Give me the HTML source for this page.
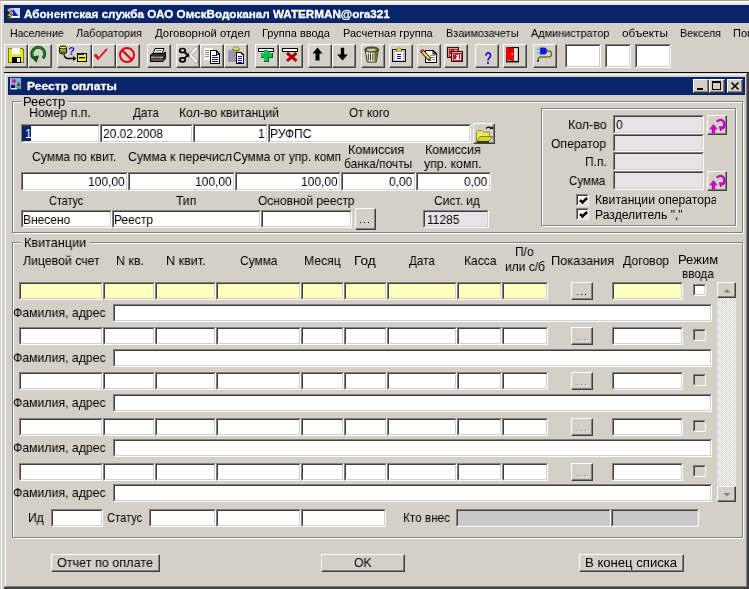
<!DOCTYPE html>
<html><head><meta charset="utf-8"><title>Реестр оплаты</title>
<style>
html,body{margin:0;padding:0;}
body{width:749px;height:589px;overflow:hidden;background:#d4d0c8;position:relative;font-family:"Liberation Sans",sans-serif;font-size:13px;color:#000;}
div{position:absolute;box-sizing:border-box;}
.t{white-space:nowrap;transform-origin:0 0;will-change:transform;}
.fld{border-top:1px solid #808080;border-left:1px solid #808080;border-right:1px solid #fff;border-bottom:1px solid #fff;overflow:hidden;}
.fld:before{content:"";position:absolute;left:0;top:0;right:0;bottom:0;border-top:1px solid #404040;border-left:1px solid #404040;border-right:1px solid #d4d0c8;border-bottom:1px solid #d4d0c8;}
.btn{background:#d4d0c8;border-top:1px solid #fff;border-left:1px solid #fff;border-right:1px solid #404040;border-bottom:1px solid #404040;}
.btn:before{content:"";position:absolute;left:0;top:0;right:0;bottom:0;border-right:1px solid #808080;border-bottom:1px solid #808080;}
.gb{border:1px solid #808080;box-shadow:1px 1px 0 #fff, inset 1px 1px 0 #fff;}
.cb{border-top:1px solid #808080;border-left:1px solid #808080;border-right:1px solid #fff;border-bottom:1px solid #fff;}
.cb:before{content:"";position:absolute;left:0;top:0;right:0;bottom:0;border-top:1px solid #404040;border-left:1px solid #404040;border-right:1px solid #d4d0c8;border-bottom:1px solid #d4d0c8;}
.cb svg{position:absolute;left:2px;top:2px;}
.tb{background:#d4d0c8;border-top:1px solid #fff;border-left:1px solid #fff;border-right:1px solid #404040;border-bottom:1px solid #404040;}
.tb:before{content:"";position:absolute;left:0;top:0;right:0;bottom:0;border-right:1px solid #808080;border-bottom:1px solid #808080;}
.tb svg{position:absolute;left:2px;top:2px;}
.cover{background:#d4d0c8;}
</style></head><body>

<div style="left:1px;top:1px;width:1px;height:589px;background:#fff"></div>
<div style="left:0px;top:0px;width:749px;height:1px;background:#a8a098"></div>
<div style="left:1px;top:1px;width:749px;height:2px;background:#fff"></div>
<div style="left:3px;top:3px;width:746px;height:2px;background:#e2e2e8"></div>
<div style="left:4px;top:5px;width:746px;height:18px;background:#0a246a"></div>
<!--APPICON-->
<div class="t" style="left:24.00px;top:7.69px;font-size:11px;line-height:13px;transform:scaleX(1.0609);font-weight:bold;-webkit-text-stroke:0.3px currentColor;color:#fff;">Абонентская служба ОАО ОмскВодоканал WATERMAN@ora321</div>
<div class="t" style="left:9.50px;top:26.69px;font-size:11px;line-height:13px;transform:scaleX(0.9554);">Население</div>
<div class="t" style="left:76.00px;top:26.69px;font-size:11px;line-height:13px;transform:scaleX(0.9851);">Лаборатория</div>
<div class="t" style="left:155.00px;top:26.69px;font-size:11px;line-height:13px;transform:scaleX(1.0326);">Договорной отдел</div>
<div class="t" style="left:262.00px;top:26.69px;font-size:11px;line-height:13px;transform:scaleX(1.0000);">Группа ввода</div>
<div class="t" style="left:343.00px;top:26.69px;font-size:11px;line-height:13px;transform:scaleX(1.0000);">Расчетная группа</div>
<div class="t" style="left:446.00px;top:26.69px;font-size:11px;line-height:13px;transform:scaleX(0.9865);">Взаимозачеты</div>
<div class="t" style="left:531.00px;top:26.69px;font-size:11px;line-height:13px;transform:scaleX(0.9873);">Администратор</div>
<div class="t" style="left:622.00px;top:26.69px;font-size:11px;line-height:13px;transform:scaleX(1.0698);">объекты</div>
<div class="t" style="left:680.00px;top:26.69px;font-size:11px;line-height:13px;transform:scaleX(0.9762);">Векселя</div>
<div class="t" style="left:733.00px;top:26.69px;font-size:11px;line-height:13px;transform:scaleX(1.0000);">Помощь</div>
<div class="tb" style="left:4px;top:44px;width:24px;height:24px;"></div>
<div class="tb" style="left:28px;top:44px;width:24px;height:24px;"></div>
<div class="tb" style="left:57px;top:44px;width:35px;height:24px;"></div>
<div class="tb" style="left:92px;top:44px;width:24px;height:24px;"></div>
<div class="tb" style="left:116px;top:44px;width:24px;height:24px;"></div>
<div class="tb" style="left:147px;top:44px;width:24px;height:24px;"></div>
<div class="tb" style="left:176px;top:44px;width:24px;height:24px;"></div>
<div class="tb" style="left:200px;top:44px;width:24px;height:24px;"></div>
<div class="tb" style="left:224px;top:44px;width:24px;height:24px;"></div>
<div class="tb" style="left:255px;top:44px;width:24px;height:24px;"></div>
<div class="tb" style="left:279px;top:44px;width:24px;height:24px;"></div>
<div class="tb" style="left:308px;top:44px;width:24px;height:24px;"></div>
<div class="tb" style="left:332px;top:44px;width:24px;height:24px;"></div>
<div class="tb" style="left:361px;top:44px;width:24px;height:24px;"></div>
<div class="tb" style="left:389px;top:44px;width:24px;height:24px;"></div>
<div class="tb" style="left:417px;top:44px;width:24px;height:24px;"></div>
<div class="tb" style="left:444px;top:44px;width:24px;height:24px;"></div>
<div class="tb" style="left:475px;top:44px;width:24px;height:24px;"></div>
<div class="tb" style="left:503px;top:44px;width:24px;height:24px;"></div>
<div class="tb" style="left:533px;top:44px;width:24px;height:24px;"></div>
<div class="fld " style="left:565px;top:44px;width:36px;height:24px;background:#fff;"></div>
<div class="fld " style="left:605px;top:44px;width:26px;height:24px;background:#fff;"></div>
<div class="fld " style="left:635px;top:44px;width:36px;height:24px;background:#fff;"></div>
<div style="left:4px;top:72px;width:745px;height:1px;background:#0c0c0c"></div>
<div style="left:5px;top:74px;width:742px;height:1px;background:#fff"></div>
<div style="left:5px;top:74px;width:1px;height:513px;background:#fff"></div>
<div style="left:4px;top:587px;width:745px;height:2px;background:#404040"></div>
<div style="left:747px;top:73px;width:2px;height:516px;background:#404040"></div>
<div style="left:5px;top:586px;width:742px;height:1px;background:#808080"></div>
<div style="left:746px;top:74px;width:1px;height:513px;background:#808080"></div>
<div style="left:8px;top:77px;width:737px;height:18px;background:#0a246a"></div>
<!--CHILDICON-->
<div class="t" style="left:27.00px;top:79.69px;font-size:11px;line-height:13px;transform:scaleX(1.0988);font-weight:bold;-webkit-text-stroke:0.3px currentColor;color:#fff;">Реестр оплаты</div>
<div class="tb" style="left:693px;top:79px;width:16px;height:14px;"></div>
<div class="tb" style="left:709px;top:79px;width:16px;height:14px;"></div>
<div class="tb" style="left:727px;top:79px;width:16px;height:14px;"></div>
<div class="gb" style="left:12px;top:101px;width:731px;height:132px;"></div>
<div class="cover" style="left:21px;top:96px;width:47px;height:12px;"></div>
<div class="t" style="left:23.00px;top:94.00px;font-size:13px;line-height:15px;transform:scaleX(1.0000);">Реестр</div>
<div class="t" style="left:29.05px;top:105.00px;font-size:13px;line-height:15px;transform:scaleX(0.9524);">Номер п.п.</div>
<div class="t" style="left:132.50px;top:105.00px;font-size:13px;line-height:15px;transform:scaleX(0.9000);">Дата</div>
<div class="t" style="left:179.06px;top:105.00px;font-size:13px;line-height:15px;transform:scaleX(0.9429);">Кол-во квитанций</div>
<div class="t" style="left:349.00px;top:105.00px;font-size:13px;line-height:15px;transform:scaleX(0.9091);">От кого</div>
<div class="fld " style="left:21px;top:124px;width:79px;height:19px;background:#fff;"></div>
<div style="left:22px;top:126px;width:9px;height:15px;background:#0a246a"></div>
<div class="t" style="left:24.50px;top:126.00px;font-size:13px;line-height:15px;transform:scaleX(0.9231);color:#fff;">1</div>
<div class="fld " style="left:100px;top:124px;width:93px;height:19px;background:#fff;"></div>
<div class="t" style="left:103.00px;top:126.00px;font-size:13px;line-height:15px;transform:scaleX(0.9231);">20.02.2008</div>
<div class="fld " style="left:193px;top:124px;width:75px;height:19px;background:#fff;"></div>
<div class="t" style="left:258.04px;top:126.00px;font-size:13px;line-height:15px;transform:scaleX(0.9231);">1</div>
<div class="fld " style="left:268px;top:124px;width:203px;height:19px;background:#fff;"></div>
<div class="t" style="left:270.08px;top:126.00px;font-size:13px;line-height:15px;transform:scaleX(0.9231);">РУФПС</div>
<div class="tb" style="left:473px;top:123px;width:22px;height:21px;"></div>
<div class="t" style="left:32.00px;top:149.00px;font-size:13px;line-height:15px;transform:scaleX(0.9333);">Сумма по квит.</div>
<div class="t" style="left:127.50px;top:149.00px;font-size:13px;line-height:15px;transform:scaleX(0.9455);">Сумма к перечисл</div>
<div class="t" style="left:232.50px;top:149.00px;font-size:13px;line-height:15px;transform:scaleX(0.9153);">Сумма от упр. комп</div>
<div class="t" style="left:348.04px;top:142.00px;font-size:13px;line-height:15px;transform:scaleX(0.9649);">Комиссия</div>
<div class="t" style="left:343.70px;top:156.00px;font-size:13px;line-height:15px;transform:scaleX(0.9162);">банка/почты</div>
<div class="t" style="left:424.54px;top:142.00px;font-size:13px;line-height:15px;transform:scaleX(0.9561);">Комиссия</div>
<div class="t" style="left:424.00px;top:156.00px;font-size:13px;line-height:15px;transform:scaleX(0.9500);">упр. комп.</div>
<div class="fld " style="left:21px;top:172px;width:107px;height:19px;background:#fff;"></div>
<div class="t" style="left:87.58px;top:174.00px;font-size:13px;line-height:15px;transform:scaleX(0.9231);">100,00</div>
<div class="fld " style="left:128px;top:172px;width:107px;height:19px;background:#fff;"></div>
<div class="t" style="left:194.58px;top:174.00px;font-size:13px;line-height:15px;transform:scaleX(0.9231);">100,00</div>
<div class="fld " style="left:235px;top:172px;width:106px;height:19px;background:#fff;"></div>
<div class="t" style="left:300.58px;top:174.00px;font-size:13px;line-height:15px;transform:scaleX(0.9231);">100,00</div>
<div class="fld " style="left:341px;top:172px;width:75px;height:19px;background:#fff;"></div>
<div class="t" style="left:389.42px;top:174.00px;font-size:13px;line-height:15px;transform:scaleX(0.9231);">0,00</div>
<div class="fld " style="left:416px;top:172px;width:75px;height:19px;background:#fff;"></div>
<div class="t" style="left:464.42px;top:174.00px;font-size:13px;line-height:15px;transform:scaleX(0.9231);">0,00</div>
<div class="t" style="left:49.00px;top:193.00px;font-size:13px;line-height:15px;transform:scaleX(0.8333);">Статус</div>
<div class="t" style="left:176.00px;top:193.00px;font-size:13px;line-height:15px;transform:scaleX(0.9318);">Тип</div>
<div class="t" style="left:258.00px;top:193.00px;font-size:13px;line-height:15px;transform:scaleX(0.9231);">Основной реестр</div>
<div class="t" style="left:434.00px;top:193.00px;font-size:13px;line-height:15px;transform:scaleX(0.9200);">Сист. ид</div>
<div class="fld " style="left:21px;top:210px;width:91px;height:18px;background:#fff;"></div>
<div class="t" style="left:23.08px;top:212.00px;font-size:13px;line-height:15px;transform:scaleX(0.9231);">Внесено</div>
<div class="fld " style="left:112px;top:210px;width:149px;height:18px;background:#fff;"></div>
<div class="t" style="left:114.08px;top:212.00px;font-size:13px;line-height:15px;transform:scaleX(0.9231);">Реестр</div>
<div class="fld " style="left:261px;top:210px;width:91px;height:18px;background:#fff;"></div>
<div class="btn" style="left:355px;top:208px;width:21px;height:22px;"></div>
<div style="left:360px;top:222px;width:1px;height:1px;background:#000"></div>
<div style="left:364px;top:222px;width:1px;height:1px;background:#000"></div>
<div style="left:368px;top:222px;width:1px;height:1px;background:#000"></div>
<div class="fld " style="left:423px;top:210px;width:66px;height:18px;background:#e6e2e6;"></div>
<div class="t" style="left:426.50px;top:212.00px;font-size:13px;line-height:15px;transform:scaleX(0.9200);">11285</div>
<div class="gb" style="left:541px;top:108px;width:195px;height:118px;"></div>
<div class="t" style="left:568.04px;top:117.00px;font-size:13px;line-height:15px;transform:scaleX(0.9564);">Кол-во</div>
<div class="t" style="left:551.00px;top:136.00px;font-size:13px;line-height:15px;transform:scaleX(0.9373);">Оператор</div>
<div class="t" style="left:585.08px;top:154.00px;font-size:13px;line-height:15px;transform:scaleX(0.9227);">П.п.</div>
<div class="t" style="left:569.00px;top:173.00px;font-size:13px;line-height:15px;transform:scaleX(0.8881);">Сумма</div>
<div class="fld " style="left:613px;top:115px;width:91px;height:19px;background:#e6e2e6;"></div>
<div class="t" style="left:616.00px;top:117.00px;font-size:13px;line-height:15px;transform:scaleX(0.9231);">0</div>
<div class="fld " style="left:613px;top:134px;width:91px;height:18px;background:#e6e2e6;"></div>
<div class="fld " style="left:613px;top:152px;width:91px;height:19px;background:#e6e2e6;"></div>
<div class="fld " style="left:613px;top:171px;width:91px;height:19px;background:#e6e2e6;"></div>
<div class="tb" style="left:707px;top:115px;width:20px;height:20px;"></div>
<div class="tb" style="left:707px;top:171px;width:20px;height:20px;"></div>
<div class="cb" style="left:576px;top:194px;width:13px;height:12px;background:#fff"><svg width="9" height="9" viewBox="0 0 9 9"><path d="M1 3 L3.5 5.5 L8 1" stroke="#000" stroke-width="2.5" fill="none"/></svg></div>
<div class="cb" style="left:576px;top:208px;width:13px;height:12px;background:#fff"><svg width="9" height="9" viewBox="0 0 9 9"><path d="M1 3 L3.5 5.5 L8 1" stroke="#000" stroke-width="2.5" fill="none"/></svg></div>
<div style="left:590px;top:190px;width:126px;height:18px;overflow:hidden;">
<div class="t" style="left:4.80px;top:3.04px;font-size:12px;line-height:14px;transform:scaleX(1.0165);">Квитанции оператора</div>
</div>
<div class="t" style="left:594.80px;top:207.64px;font-size:12px;line-height:14px;transform:scaleX(1.0140);">Разделитель ","</div>
<div class="gb" style="left:12px;top:242px;width:731px;height:296px;"></div>
<div class="cover" style="left:21px;top:237px;width:69px;height:12px;"></div>
<div class="t" style="left:23.53px;top:235.00px;font-size:13px;line-height:15px;transform:scaleX(0.9714);">Квитанции</div>
<div class="t" style="left:23.00px;top:253.00px;font-size:13px;line-height:15px;transform:scaleX(0.9469);">Лицевой счет</div>
<div class="t" style="left:115.54px;top:253.00px;font-size:13px;line-height:15px;transform:scaleX(0.9571);">N кв.</div>
<div class="t" style="left:165.53px;top:253.00px;font-size:13px;line-height:15px;transform:scaleX(0.9692);">N квит.</div>
<div class="t" style="left:239.70px;top:253.00px;font-size:13px;line-height:15px;transform:scaleX(0.9167);">Сумма</div>
<div class="t" style="left:303.56px;top:253.00px;font-size:13px;line-height:15px;transform:scaleX(0.9359);">Месяц</div>
<div class="t" style="left:353.95px;top:253.00px;font-size:13px;line-height:15px;transform:scaleX(1.0500);">Год</div>
<div class="t" style="left:409.00px;top:253.00px;font-size:13px;line-height:15px;transform:scaleX(0.9000);">Дата</div>
<div class="t" style="left:463.57px;top:253.00px;font-size:13px;line-height:15px;transform:scaleX(0.9286);">Касса</div>
<div class="t" style="left:551.02px;top:253.00px;font-size:13px;line-height:15px;transform:scaleX(0.9841);">Показания</div>
<div class="t" style="left:623.00px;top:253.00px;font-size:13px;line-height:15px;transform:scaleX(0.9388);">Договор</div>
<div class="t" style="left:515.31px;top:244.00px;font-size:13px;line-height:15px;transform:scaleX(0.9231);">П/о</div>
<div class="t" style="left:505.15px;top:259.00px;font-size:13px;line-height:15px;transform:scaleX(0.9231);">или с/б</div>
<div class="t" style="left:678.00px;top:252.00px;font-size:13px;line-height:15px;transform:scaleX(1.0000);">Режим</div>
<div class="t" style="left:681.70px;top:266.00px;font-size:13px;line-height:15px;transform:scaleX(0.8972);">ввода</div>
<div class="fld " style="left:19px;top:282px;width:84px;height:18px;background:#ffffc0;"></div>
<div class="fld " style="left:103px;top:282px;width:52px;height:18px;background:#ffffc0;"></div>
<div class="fld " style="left:155px;top:282px;width:61px;height:18px;background:#ffffc0;"></div>
<div class="fld " style="left:216px;top:282px;width:85px;height:18px;background:#ffffc0;"></div>
<div class="fld " style="left:301px;top:282px;width:43px;height:18px;background:#ffffc0;"></div>
<div class="fld " style="left:344px;top:282px;width:43px;height:18px;background:#ffffc0;"></div>
<div class="fld " style="left:387px;top:282px;width:70px;height:18px;background:#ffffc0;"></div>
<div class="fld " style="left:457px;top:282px;width:45px;height:18px;background:#ffffc0;"></div>
<div class="fld " style="left:502px;top:282px;width:46px;height:18px;background:#ffffc0;"></div>
<div class="btn" style="left:571px;top:282px;width:22px;height:18px;"></div>
<div style="left:577px;top:294px;width:1px;height:1px;background:#000"></div>
<div style="left:581px;top:294px;width:1px;height:1px;background:#000"></div>
<div style="left:585px;top:294px;width:1px;height:1px;background:#000"></div>
<div class="fld " style="left:612px;top:282px;width:71px;height:18px;background:#ffffc0;"></div>
<div class="cb" style="left:693px;top:284px;width:13px;height:12px;background:#fff"></div>
<div class="t" style="left:13.00px;top:305.00px;font-size:13px;line-height:15px;transform:scaleX(0.9424);">Фамилия, адрес</div>
<div class="fld " style="left:113px;top:304px;width:599px;height:18px;background:#fff;"></div>
<div class="fld " style="left:19px;top:327px;width:84px;height:18px;background:#fff;"></div>
<div class="fld " style="left:103px;top:327px;width:52px;height:18px;background:#fff;"></div>
<div class="fld " style="left:155px;top:327px;width:61px;height:18px;background:#fff;"></div>
<div class="fld " style="left:216px;top:327px;width:85px;height:18px;background:#fff;"></div>
<div class="fld " style="left:301px;top:327px;width:43px;height:18px;background:#fff;"></div>
<div class="fld " style="left:344px;top:327px;width:43px;height:18px;background:#fff;"></div>
<div class="fld " style="left:387px;top:327px;width:70px;height:18px;background:#fff;"></div>
<div class="fld " style="left:457px;top:327px;width:45px;height:18px;background:#fff;"></div>
<div class="fld " style="left:502px;top:327px;width:46px;height:18px;background:#fff;"></div>
<div class="btn" style="left:571px;top:327px;width:22px;height:18px;"></div>
<div style="left:578px;top:340px;width:1px;height:1px;background:#fff"></div>
<div style="left:577px;top:339px;width:1px;height:1px;background:#808080"></div>
<div style="left:582px;top:340px;width:1px;height:1px;background:#fff"></div>
<div style="left:581px;top:339px;width:1px;height:1px;background:#808080"></div>
<div style="left:586px;top:340px;width:1px;height:1px;background:#fff"></div>
<div style="left:585px;top:339px;width:1px;height:1px;background:#808080"></div>
<div class="fld " style="left:612px;top:327px;width:71px;height:18px;background:#fff;"></div>
<div class="cb" style="left:693px;top:329px;width:13px;height:12px;background:#d4d0c8"></div>
<div class="t" style="left:13.00px;top:350.00px;font-size:13px;line-height:15px;transform:scaleX(0.9424);">Фамилия, адрес</div>
<div class="fld " style="left:113px;top:349px;width:599px;height:18px;background:#fff;"></div>
<div class="fld " style="left:19px;top:372px;width:84px;height:18px;background:#fff;"></div>
<div class="fld " style="left:103px;top:372px;width:52px;height:18px;background:#fff;"></div>
<div class="fld " style="left:155px;top:372px;width:61px;height:18px;background:#fff;"></div>
<div class="fld " style="left:216px;top:372px;width:85px;height:18px;background:#fff;"></div>
<div class="fld " style="left:301px;top:372px;width:43px;height:18px;background:#fff;"></div>
<div class="fld " style="left:344px;top:372px;width:43px;height:18px;background:#fff;"></div>
<div class="fld " style="left:387px;top:372px;width:70px;height:18px;background:#fff;"></div>
<div class="fld " style="left:457px;top:372px;width:45px;height:18px;background:#fff;"></div>
<div class="fld " style="left:502px;top:372px;width:46px;height:18px;background:#fff;"></div>
<div class="btn" style="left:571px;top:372px;width:22px;height:18px;"></div>
<div style="left:578px;top:385px;width:1px;height:1px;background:#fff"></div>
<div style="left:577px;top:384px;width:1px;height:1px;background:#808080"></div>
<div style="left:582px;top:385px;width:1px;height:1px;background:#fff"></div>
<div style="left:581px;top:384px;width:1px;height:1px;background:#808080"></div>
<div style="left:586px;top:385px;width:1px;height:1px;background:#fff"></div>
<div style="left:585px;top:384px;width:1px;height:1px;background:#808080"></div>
<div class="fld " style="left:612px;top:372px;width:71px;height:18px;background:#fff;"></div>
<div class="cb" style="left:693px;top:374px;width:13px;height:12px;background:#d4d0c8"></div>
<div class="t" style="left:13.00px;top:395.00px;font-size:13px;line-height:15px;transform:scaleX(0.9424);">Фамилия, адрес</div>
<div class="fld " style="left:113px;top:394px;width:599px;height:18px;background:#fff;"></div>
<div class="fld " style="left:19px;top:418px;width:84px;height:18px;background:#fff;"></div>
<div class="fld " style="left:103px;top:418px;width:52px;height:18px;background:#fff;"></div>
<div class="fld " style="left:155px;top:418px;width:61px;height:18px;background:#fff;"></div>
<div class="fld " style="left:216px;top:418px;width:85px;height:18px;background:#fff;"></div>
<div class="fld " style="left:301px;top:418px;width:43px;height:18px;background:#fff;"></div>
<div class="fld " style="left:344px;top:418px;width:43px;height:18px;background:#fff;"></div>
<div class="fld " style="left:387px;top:418px;width:70px;height:18px;background:#fff;"></div>
<div class="fld " style="left:457px;top:418px;width:45px;height:18px;background:#fff;"></div>
<div class="fld " style="left:502px;top:418px;width:46px;height:18px;background:#fff;"></div>
<div class="btn" style="left:571px;top:418px;width:22px;height:18px;"></div>
<div style="left:578px;top:431px;width:1px;height:1px;background:#fff"></div>
<div style="left:577px;top:430px;width:1px;height:1px;background:#808080"></div>
<div style="left:582px;top:431px;width:1px;height:1px;background:#fff"></div>
<div style="left:581px;top:430px;width:1px;height:1px;background:#808080"></div>
<div style="left:586px;top:431px;width:1px;height:1px;background:#fff"></div>
<div style="left:585px;top:430px;width:1px;height:1px;background:#808080"></div>
<div class="fld " style="left:612px;top:418px;width:71px;height:18px;background:#fff;"></div>
<div class="cb" style="left:693px;top:420px;width:13px;height:12px;background:#d4d0c8"></div>
<div class="t" style="left:13.00px;top:440.00px;font-size:13px;line-height:15px;transform:scaleX(0.9424);">Фамилия, адрес</div>
<div class="fld " style="left:113px;top:439px;width:599px;height:18px;background:#fff;"></div>
<div class="fld " style="left:19px;top:463px;width:84px;height:18px;background:#fff;"></div>
<div class="fld " style="left:103px;top:463px;width:52px;height:18px;background:#fff;"></div>
<div class="fld " style="left:155px;top:463px;width:61px;height:18px;background:#fff;"></div>
<div class="fld " style="left:216px;top:463px;width:85px;height:18px;background:#fff;"></div>
<div class="fld " style="left:301px;top:463px;width:43px;height:18px;background:#fff;"></div>
<div class="fld " style="left:344px;top:463px;width:43px;height:18px;background:#fff;"></div>
<div class="fld " style="left:387px;top:463px;width:70px;height:18px;background:#fff;"></div>
<div class="fld " style="left:457px;top:463px;width:45px;height:18px;background:#fff;"></div>
<div class="fld " style="left:502px;top:463px;width:46px;height:18px;background:#fff;"></div>
<div class="btn" style="left:571px;top:463px;width:22px;height:18px;"></div>
<div style="left:578px;top:476px;width:1px;height:1px;background:#fff"></div>
<div style="left:577px;top:475px;width:1px;height:1px;background:#808080"></div>
<div style="left:582px;top:476px;width:1px;height:1px;background:#fff"></div>
<div style="left:581px;top:475px;width:1px;height:1px;background:#808080"></div>
<div style="left:586px;top:476px;width:1px;height:1px;background:#fff"></div>
<div style="left:585px;top:475px;width:1px;height:1px;background:#808080"></div>
<div class="fld " style="left:612px;top:463px;width:71px;height:18px;background:#fff;"></div>
<div class="cb" style="left:693px;top:465px;width:13px;height:12px;background:#d4d0c8"></div>
<div class="t" style="left:13.00px;top:485.00px;font-size:13px;line-height:15px;transform:scaleX(0.9424);">Фамилия, адрес</div>
<div class="fld " style="left:113px;top:484px;width:599px;height:18px;background:#fff;"></div>
<div id="sbtrack" style="left:717px;top:282px;width:19px;height:220px;background:repeating-conic-gradient(#fff 0% 25%, #d4d0c8 0% 50%) 0 0/2px 2px;"></div>
<div class="tb" style="left:717px;top:282px;width:19px;height:16px;"><svg width="9" height="5" style="left:5px;top:5px"><path d="M0.5 4.5 L4 1 L7.5 4.5 Z" fill="#808080"/></svg></div>
<div class="tb" style="left:717px;top:486px;width:19px;height:16px;"><svg width="9" height="5" style="left:5px;top:6px"><path d="M0.5 0 L4 3.5 L7.5 0 Z" fill="#808080"/></svg></div>
<div class="t" style="left:27.56px;top:510.00px;font-size:13px;line-height:15px;transform:scaleX(0.9375);">Ид</div>
<div class="fld " style="left:51px;top:509px;width:52px;height:18px;background:#fff;"></div>
<div class="t" style="left:107.00px;top:510.00px;font-size:13px;line-height:15px;transform:scaleX(0.8571);">Статус</div>
<div class="fld " style="left:149px;top:509px;width:67px;height:18px;background:#fff;"></div>
<div class="fld " style="left:216px;top:509px;width:85px;height:18px;background:#fff;"></div>
<div class="fld " style="left:301px;top:509px;width:85px;height:18px;background:#fff;"></div>
<div class="t" style="left:402.60px;top:510.00px;font-size:13px;line-height:15px;transform:scaleX(0.9038);">Кто внес</div>
<div class="fld " style="left:456px;top:509px;width:155px;height:18px;background:#c8c8cc;"></div>
<div class="fld " style="left:611px;top:509px;width:88px;height:18px;background:#c8c8cc;"></div>
<div class="btn" style="left:51px;top:554px;width:109px;height:18px;"></div>
<div class="t" style="left:57.00px;top:555.00px;font-size:13px;line-height:15px;transform:scaleX(0.9697);">Отчет по оплате</div>
<div class="btn" style="left:321px;top:554px;width:84px;height:18px;"></div>
<div class="t" style="left:353.50px;top:555.00px;font-size:13px;line-height:15px;transform:scaleX(0.9474);">OK</div>
<div class="btn" style="left:579px;top:554px;width:105px;height:18px;"></div>
<div class="t" style="left:584.69px;top:555.00px;font-size:13px;line-height:15px;transform:scaleX(1.0088);">В конец списка</div>
<svg width="749" height="589" viewBox="0 0 749 589" style="position:absolute;left:0;top:0;pointer-events:none">
<g><rect x="10" y="8" width="10" height="10" fill="#c8d8f8"/><path d="M13 9 L19 17 L13 17 Z" fill="#1010d0"/><rect x="11" y="16" width="8" height="2" fill="#fff"/><path d="M7 9 L13 8 L13 11 L9 12 Z" fill="#c0a0e0"/><path d="M11 11 L7 16 L9.5 16 L7 21 L12.5 14.5 L10 14.5 L13 11 Z" fill="#e8e810" stroke="#403000" stroke-width="0.8"/></g>
<g><rect x="10" y="78" width="11" height="11" fill="#60c0d8"/><rect x="10" y="78" width="1" height="11" fill="#d0a0e0"/><circle cx="14" cy="81" r="2" fill="#e0108c"/><path d="M16.5 86 L19 81.5 L20.5 86 Z" fill="#c01020"/><rect x="11" y="85" width="4" height="3" fill="#101080"/><rect x="16" y="87" width="4" height="2" fill="#20b0a0"/><rect x="11" y="88" width="6" height="1.5" fill="#e8e8f8"/></g>
<g shape-rendering="crispEdges"><path d="M8 48 H22 L24 50 V63 H8 Z" fill="#e4e430" stroke="none"/><path d="M8.5 48.5 H22 L23.5 50 V62.5 H8.5 Z" fill="none" stroke="#808000" stroke-width="1"/><rect x="12" y="48" width="8" height="6" fill="#fff"/><rect x="12" y="57" width="9" height="6" fill="#000"/><rect x="17" y="58" width="3" height="4" fill="#fff"/></g>
<path d="M42.8 58.2 A6.4 6.4 0 1 0 33.2 57.6" fill="none" stroke="#0a5a14" stroke-width="3"/><path d="M30.5 56.5 L39 55.5 L36.5 62.8 Z" fill="#0a5a14"/><path d="M42.4 57.6 A5.9 5.9 0 1 0 33.8 57" fill="none" stroke="#2f8f3a" stroke-width="1"/>
<g><path d="M59.5 48 V52.5 A3.5 1.5 0 0 0 66.5 52.5 V48" fill="#f0f040" stroke="#000" stroke-width="1"/><ellipse cx="63" cy="47.5" rx="3.5" ry="1.5" fill="#f0f040" stroke="#000" stroke-width="1"/><path d="M59.5 49.8 A3.5 1.5 0 0 0 66.5 49.8 M59.5 51.4 A3.5 1.5 0 0 0 66.5 51.4" fill="none" stroke="#000" stroke-width="0.8"/><path d="M64 55 Q65 58.5 68 58.5 H74" fill="none" stroke="#000" stroke-width="1.3"/><path d="M73 56 L76.5 58.5 L73 61 Z" fill="#000"/><rect x="77.5" y="53.5" width="9" height="8" fill="#f0f040" stroke="#000" stroke-width="1"/><rect x="78" y="53" width="6" height="2" fill="#101080"/><rect x="79" y="57" width="6" height="1.3" fill="#000"/><text x="68.2" y="54.5" font-family="Liberation Sans" font-weight="bold" font-size="11" fill="#1818e0">?</text></g>
<path d="M94.5 55 L98 59 L107 48.8" fill="none" stroke="#e00828" stroke-width="1.8"/><path d="M94 55.5 L96 53.5 L99 57.5 L98 59.5 Z" fill="#e00828"/>
<circle cx="127" cy="55" r="7" fill="none" stroke="#e00018" stroke-width="2"/><path d="M122 50 L132 60" stroke="#e00018" stroke-width="2.2"/>
<g><path d="M153 54 L155 48.5 H164 L162 54 Z" fill="#fff" stroke="#000" stroke-width="1"/><path d="M156 50.5 H162 M155.3 52.3 H161.3" stroke="#606060" stroke-width="0.8"/><path d="M150.5 55 L152.5 53.5 H163.5 L165.5 52 V58.5 L163 61.5 H150.5 Z" fill="#303030" stroke="#000" stroke-width="1"/><rect x="151" y="56.6" width="12" height="1.6" fill="#b0b0b0"/><rect x="151" y="59.6" width="12" height="1" fill="#808080"/><rect x="154" y="57" width="6" height="0.9" fill="#e04040"/></g>
<g><path d="M187 56.5 L195.5 47 L197.5 47 L197.5 49 L189.5 57.5 Z" fill="#fff" stroke="#808080" stroke-width="0.6"/><path d="M187 53.5 L189.5 52.5 L197.5 61 L197.5 63 L195.5 63 Z" fill="#fff" stroke="#808080" stroke-width="0.6"/><ellipse cx="182.5" cy="50.5" rx="2.8" ry="2" fill="none" stroke="#000" stroke-width="1.7"/><ellipse cx="182.5" cy="59.8" rx="2.8" ry="2" fill="none" stroke="#000" stroke-width="1.7"/><path d="M184.5 52 L189 56.5 M184.5 58.3 L189 53.8" stroke="#000" stroke-width="1.8"/></g>
<g shape-rendering="crispEdges"><rect x="204" y="48" width="9" height="12" fill="#fff"/><path d="M205 50.5 H209 M205 52.5 H209 M205 54.5 H209 M205 56.5 H209" stroke="#909090" stroke-width="1"/><path d="M210.5 50.5 H216 L219.5 54 V63.5 H210.5 Z" fill="#fff" stroke="#000" stroke-width="1"/><path d="M216 50.5 V54 H219.5" fill="none" stroke="#000" stroke-width="1"/><path d="M212 55.5 H217 M212 57.5 H218 M212 59.5 H218 M212 61.5 H218" stroke="#1010c0" stroke-width="1"/></g>
<g shape-rendering="crispEdges"><rect x="228" y="50" width="11" height="12" fill="#9898a8"/><path d="M232 50 L234 47 H238 L240 50 Z" fill="#e8e850" stroke="#606000" stroke-width="0.6" shape-rendering="auto"/><path d="M236.5 52.5 H241 L243.5 55 V63.5 H236.5 Z" fill="#fff" stroke="#000" stroke-width="1"/><path d="M238 56.5 H242 M238 58.5 H242 M238 60.5 H242 M238 62 H242" stroke="#1010c0" stroke-width="1"/></g>
<g shape-rendering="crispEdges"><rect x="258.5" y="48.5" width="15" height="3" fill="#fff" stroke="#000" stroke-width="1"/><rect x="264" y="51" width="5" height="11" fill="#006428"/><rect x="261" y="53" width="12" height="5" fill="#006428"/><rect x="264" y="50" width="4" height="11" fill="#10c050"/><rect x="261" y="53" width="11" height="4" fill="#10c050"/></g>
<g><rect x="282.5" y="48.5" width="15" height="3" fill="#fff" stroke="#000" stroke-width="1" shape-rendering="crispEdges"/><path d="M287 53 L296.5 60.8 M296.5 53 L287 60.8" stroke="#b00010" stroke-width="3"/></g>
<path d="M317.5 47.5 L322.5 53.5 H319.5 V60.5 H315.5 V53.5 H312.5 Z" fill="#000"/>
<path d="M340.8 47.8 H344.2 V54.6 H347.8 L342.5 60.4 L337.2 54.6 H340.8 Z" fill="#000"/>
<g><path d="M365.2 50 L367.3 62 H376.2 L378.3 50 Z" fill="#fff" stroke="#303018" stroke-width="1"/><path d="M374.3 51.5 L378 50.5 L376 61.6 H374.3 Z" fill="#707020"/><ellipse cx="371.7" cy="49.6" rx="7" ry="2.6" fill="#6c6c28" stroke="#303018" stroke-width="1"/><ellipse cx="371.4" cy="50" rx="4.6" ry="1.2" fill="#c8c8a8"/><path d="M368.3 53.5 V60.5 M370.6 53.5 V60.5 M372.9 53.5 V60.5" stroke="#202010" stroke-width="1"/></g>
<g shape-rendering="crispEdges"><rect x="392.5" y="49.5" width="13" height="12" fill="#c8c8c8" stroke="#000" stroke-width="1"/><rect x="395" y="52" width="8" height="8" fill="#fff"/><path d="M396.5 54.5 H401 M396.5 56.5 H401 M396.5 58.5 H401" stroke="#1010c0" stroke-width="1"/><path d="M396 51 L397.5 48 H400.5 L402 51 Z" fill="#e8e850" stroke="#606000" stroke-width="0.6" shape-rendering="auto"/></g>
<g><path d="M425.5 50.5 H433 L436.5 54 V62.5 H425.5 Z" fill="#fff" stroke="#000" stroke-width="1" shape-rendering="crispEdges"/><path d="M433 50.5 V54 H436.5" fill="none" stroke="#000" stroke-width="1"/><path d="M430 55.5 H435 M431 57.5 H435 M432 59.5 H435" stroke="#808080" stroke-width="0.9"/><path d="M421.5 50.5 L430 59.5" stroke="#000" stroke-width="4"/><path d="M422.5 51.5 L429.5 59" stroke="#f0e040" stroke-width="2.4"/><path d="M421 50 L422.8 51.8" stroke="#e02060" stroke-width="3"/><path d="M429 58.4 L431.5 61.3 L428 60 Z" fill="#000"/></g>
<g shape-rendering="crispEdges"><rect x="447.5" y="47.5" width="11" height="10" fill="#e89090" stroke="#301010" stroke-width="1"/><rect x="449" y="49" width="8" height="7" fill="#f0c8c8" stroke="#b03030" stroke-width="1"/><path d="M451 50.5 V54 M451 50.5 H454" stroke="#d00010" stroke-width="1.2" fill="none"/><rect x="451.5" y="51.5" width="11" height="10" fill="#e8a0a0" stroke="#301010" stroke-width="1"/><rect x="453" y="53" width="8" height="7" fill="#f4dcdc" stroke="#b03030" stroke-width="1"/><path d="M455 54.5 V59 M455 54.5 H457.5 M455 56.5 H457 M459.5 54 V59" stroke="#d00010" stroke-width="1.2" fill="none"/></g>
<text transform="translate(484.6,63.6) scale(0.82,1.05)" font-family="Liberation Sans" font-weight="bold" font-size="15" fill="#1010e0">?</text>
<g><rect x="506.5" y="47.5" width="12" height="14" fill="#c8c4bc" stroke="#000" stroke-width="1" shape-rendering="crispEdges"/><rect x="514" y="49" width="3" height="11" fill="#e8e8e8"/><path d="M506 47 L514 48 V61 L506 60 Z" fill="#e80000"/><rect x="511.5" y="53.5" width="1.4" height="1.6" fill="#ffd0d0"/><rect x="506" y="61" width="13" height="1.4" fill="#000"/></g>
<g><path d="M546.5 51 H549 Q551.5 51 551.5 54 Q551.5 57 549 57 H541 Q538 57 538 60.5" fill="none" stroke="#707010" stroke-width="1.4"/><path d="M540 47.5 H544 Q547 47.5 547 51 Q547 54.5 544 54.5 H540 Z" fill="#1818d8"/><rect x="537" y="48.6" width="3.2" height="1.4" fill="#20c8e0"/><rect x="537" y="52" width="3.2" height="1.4" fill="#20c8e0"/><rect x="537" y="60" width="2" height="1.6" fill="#202060"/></g>
<g><path d="M476.5 141 V132 L478 130.5 H482 L483.5 132 H489.5 V137" fill="#e8e860" stroke="#808020" stroke-width="0.8"/><path d="M476.5 141.3 L480 136.5 H493 L489 141.3 Z" fill="#d8d838" stroke="#707010" stroke-width="0.8"/><path d="M477 142 H489" stroke="#000" stroke-width="1.2"/><path d="M486 128.5 Q489 125.5 491.5 129" fill="none" stroke="#000" stroke-width="1.2"/><path d="M489.5 129 H493 V126 Z" fill="#000"/></g>
<g transform="translate(0,0)"><path d="M713.5 124 L717.6 129.2 H715.2 V133.2 H711.8 V129.2 H709.4 Z" fill="#c400c4"/><path d="M716.8 121.6 Q721.5 117.8 724 122.5 Q725.3 126.5 722.3 128.5" fill="none" stroke="#c400c4" stroke-width="2.3"/><path d="M718.8 126.2 L724.8 126.4 L720.3 131.5 Z" fill="#c400c4"/></g>
<g transform="translate(0,56)"><path d="M713.5 124 L717.6 129.2 H715.2 V133.2 H711.8 V129.2 H709.4 Z" fill="#c400c4"/><path d="M716.8 121.6 Q721.5 117.8 724 122.5 Q725.3 126.5 722.3 128.5" fill="none" stroke="#c400c4" stroke-width="2.3"/><path d="M718.8 126.2 L724.8 126.4 L720.3 131.5 Z" fill="#c400c4"/></g>
<g shape-rendering="crispEdges" fill="#000"><rect x="697" y="88" width="6" height="2"/><path d="M712 81 H721 V90 H712 Z M713 83 V89 H720 V83 Z" fill-rule="evenodd"/></g><path d="M731.5 82.5 L738.5 89.5 M738.5 82.5 L731.5 89.5" stroke="#000" stroke-width="1.6"/>
</svg>
</body></html>
